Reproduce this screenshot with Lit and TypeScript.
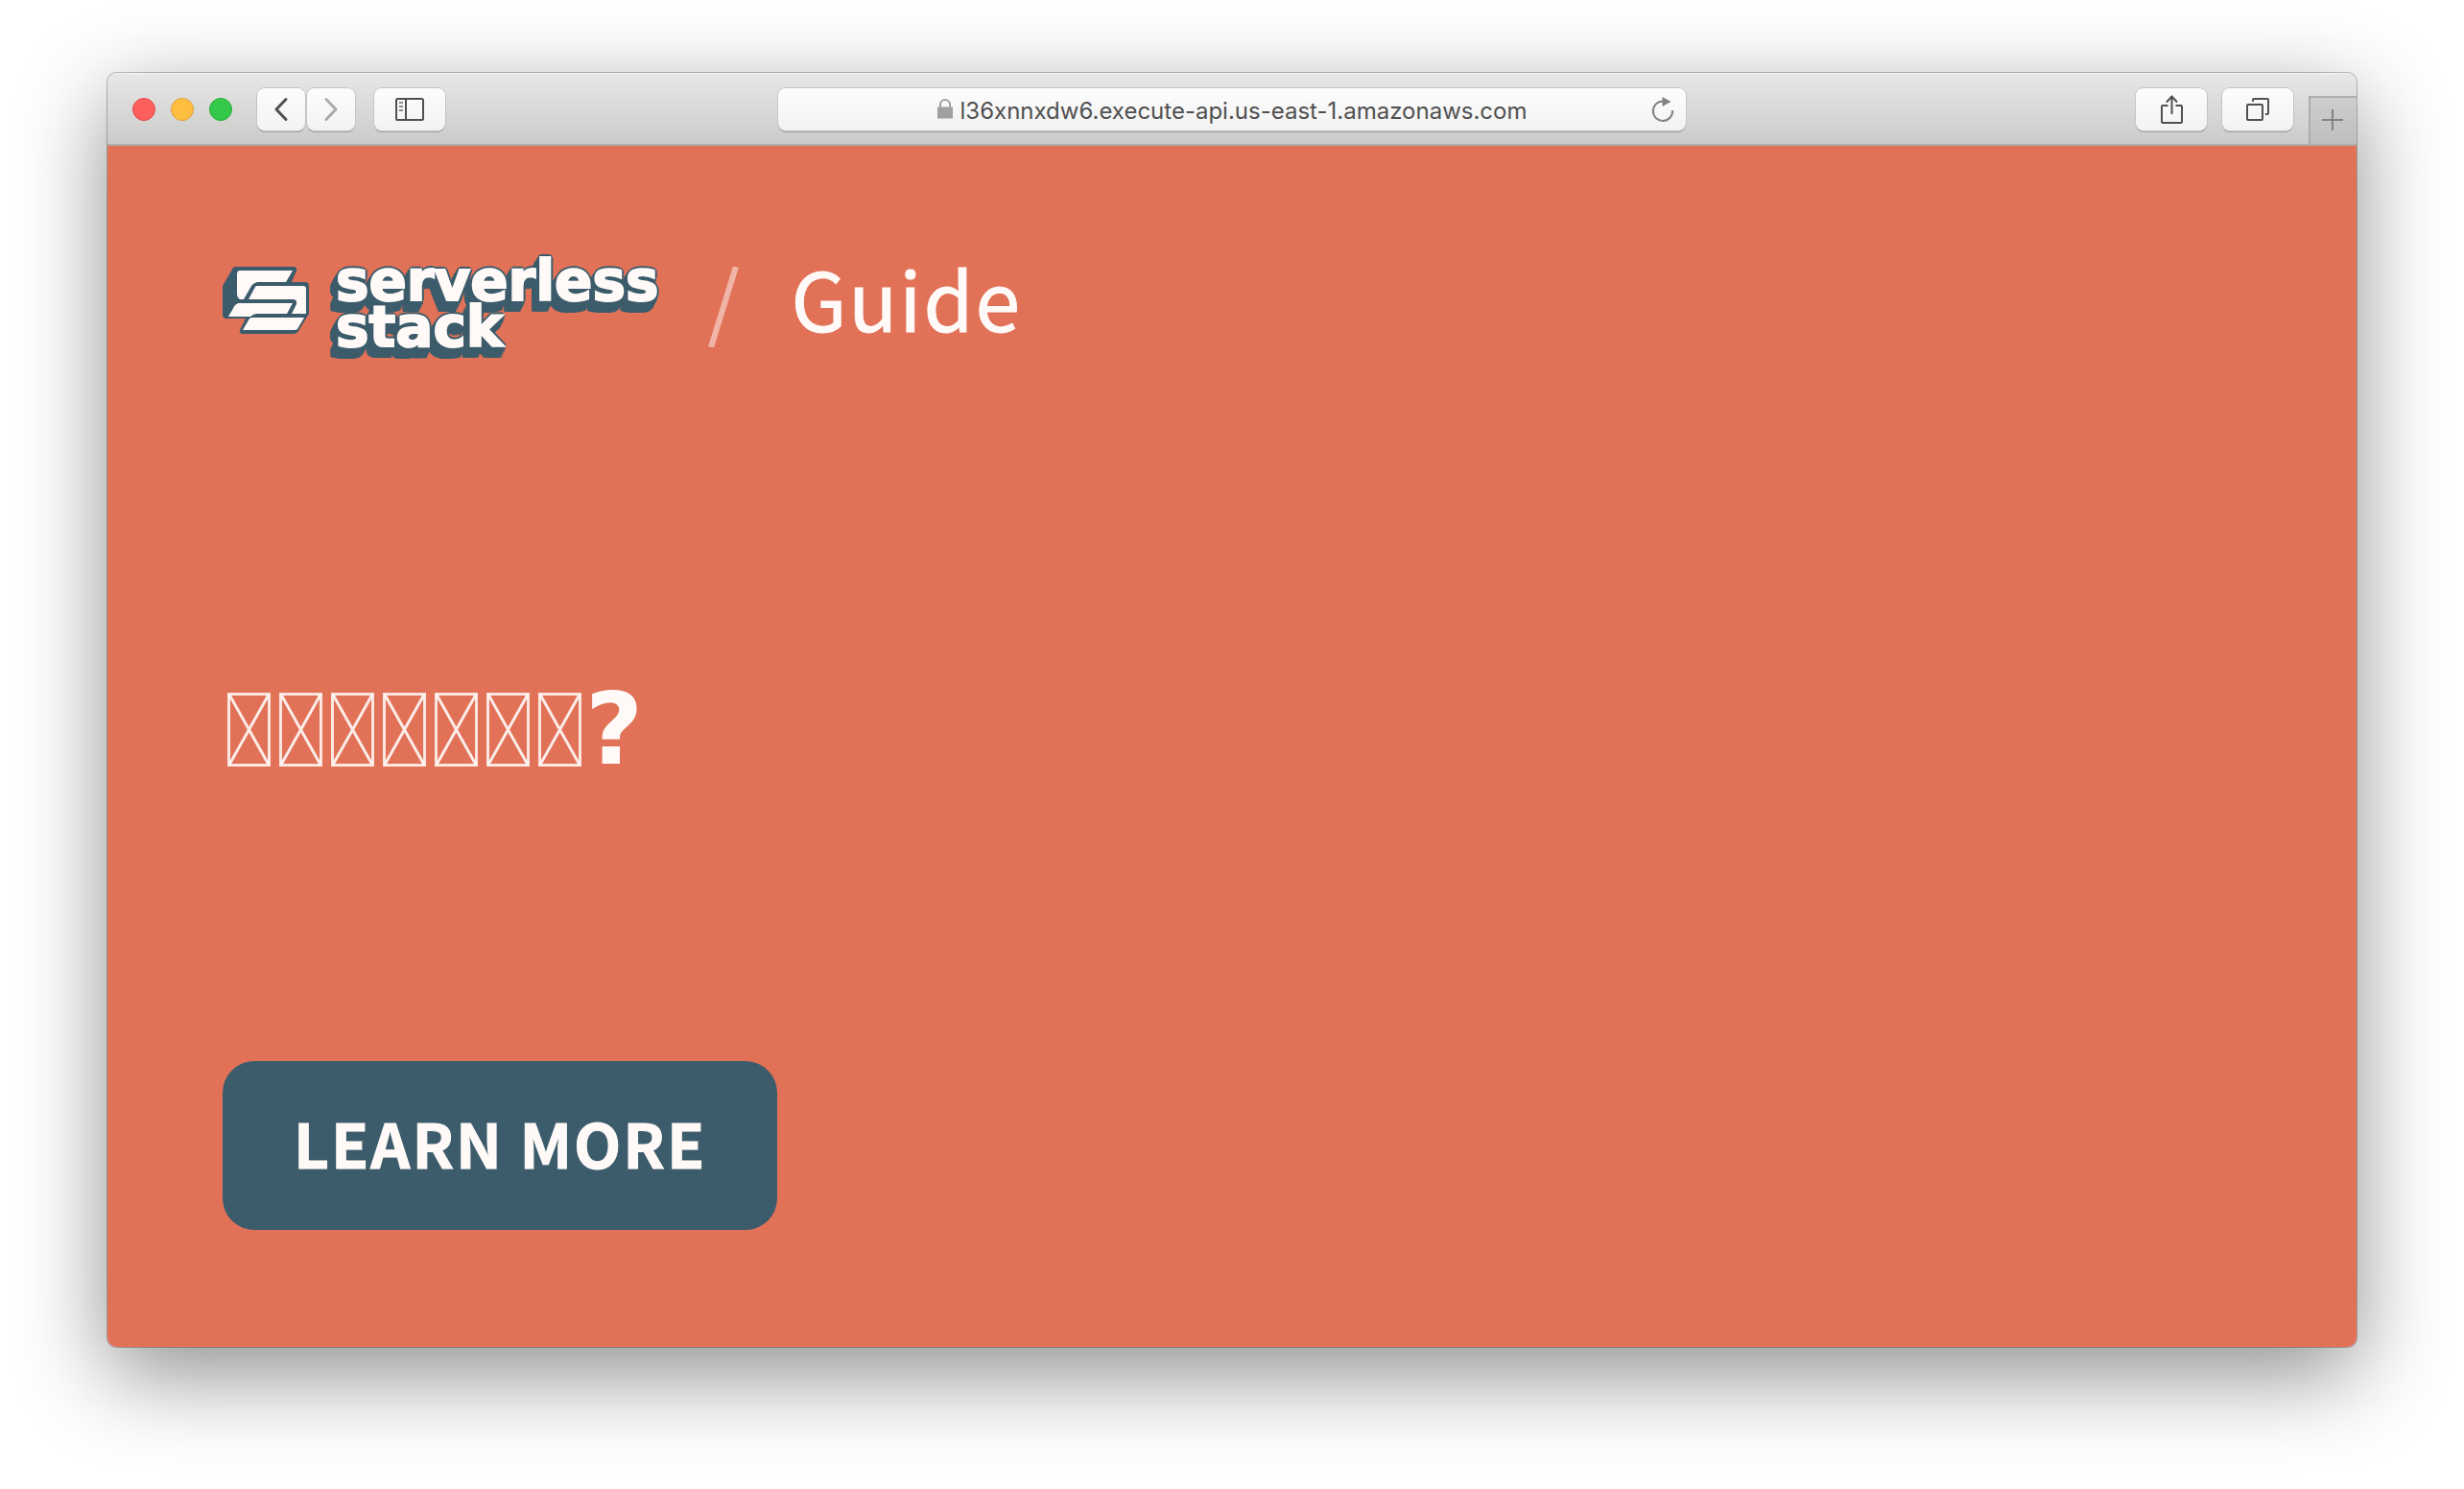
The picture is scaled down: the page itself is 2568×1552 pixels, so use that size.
import { LitElement, html, css } from "lit";
import { customElement, property } from "lit/decorators.js";

@customElement("browser-toolbar")
class BrowserToolbar extends LitElement {
  @property() address = "";

  static styles = css`
    :host {
      display: block;
    }
    .toolbar {
      box-sizing: border-box;
      display: grid;
      grid-template-columns: 1fr minmax(0, 946px) 1fr;
      align-items: center;
      height: 76px;
      border-top: 1px solid #f5f5f5;
      border-bottom: 2px solid #acaeac;
      background: linear-gradient(#e7e7e7, #cbcbc9);
    }
    button {
      margin: 0;
      padding: 0;
      border: 0;
      background: none;
      display: flex;
      align-items: center;
      justify-content: center;
    }
    .left,
    .right,
    .lights,
    .history {
      display: flex;
      align-items: center;
    }
    .left {
      padding-left: 26px;
    }
    .lights {
      gap: 16px;
      margin-right: 26px;
    }
    .light {
      width: 24px;
      height: 24px;
      border-radius: 50%;
      background: #fd605c;
      border: 1px solid #e2494a;
    }
    .light.minimize {
      background: #febf40;
      border-color: #dfa036;
    }
    .light.zoom {
      background: #34c94a;
      border-color: #28ab37;
    }
    .history {
      gap: 2px;
      margin-right: 20px;
    }
    .tool {
      box-sizing: border-box;
      width: 74px;
      height: 44px;
      border-radius: 8px;
      background: linear-gradient(#fdfdfd, #f2f2f2);
      box-shadow: 0 0 0 1px #c4c4c4, 0 2px 0 #a4a4a4;
    }
    .history .tool {
      width: 50px;
    }
    .address {
      display: grid;
      grid-template-columns: 1fr auto 1fr;
      align-items: center;
      height: 44px;
      border-radius: 8px;
      background: linear-gradient(#fdfdfd, #f2f2f2);
      box-shadow: 0 0 0 1px #c4c4c4, 0 2px 0 #a0a0a0;
    }
    .field {
      grid-column: 2;
      display: flex;
      align-items: center;
      gap: 8px;
    }
    input {
      field-sizing: content;
      margin: 0;
      padding: 4px 0 0;
      border: 0;
      outline: 0;
      background: none;
      color: #505050;
      font: 24px/32px Inter, "Liberation Sans", sans-serif;
    }
    .reload {
      justify-self: end;
      margin-right: 12px;
    }
    .right {
      justify-content: flex-end;
      align-self: stretch;
      gap: 16px;
    }
    .new-tab {
      align-self: flex-end;
      box-sizing: border-box;
      width: 50px;
      height: 50px;
      padding: 0 2px 2px 0;
      border-top: 2px solid #adadad;
      border-left: 2px solid #adadad;
      background: linear-gradient(#cecece, #bebebc);
    }
    svg {
      display: block;
    }
  `;

  render() {
    return html`
      <div class="toolbar">
        <div class="left">
          <div class="lights">
            <button class="light" aria-label="Close"></button>
            <button class="light minimize" aria-label="Minimize"></button>
            <button class="light zoom" aria-label="Zoom"></button>
          </div>
          <div class="history">
            <button class="tool" aria-label="Back">
              <svg width="16" height="26" viewBox="0 0 16 26" fill="none" stroke="#505050" stroke-width="3" stroke-linecap="round" stroke-linejoin="round"><path d="M13 2.500L3 13L13 23.500" /></svg>
            </button>
            <button class="tool" aria-label="Forward">
              <svg width="16" height="26" viewBox="0 0 16 26" fill="none" stroke="#ababab" stroke-width="3" stroke-linecap="round" stroke-linejoin="round"><path d="M3 2.500L13 13L3 23.500" /></svg>
            </button>
          </div>
          <button class="tool" aria-label="Show sidebar">
            <svg width="30" height="24" viewBox="0 0 30 24" fill="none" stroke="#505050" stroke-width="2"><rect x="1" y="1" width="28" height="22" rx="1.500" /><path d="M11 1V23" /><path d="M4 5H8M4 9H8M4 13H8" stroke="#8c8c8c" /></svg>
          </button>
        </div>
        <div class="address">
          <label class="field">
            <svg width="16" height="21" viewBox="0 0 16 21" role="img" aria-label="Secure address"><path d="M3 9V6a5 5 0 0 1 10 0V9" fill="none" stroke="#a0a0a0" stroke-width="2" /><path d="M0 8.500H16V20.500H0Z" fill="#a0a0a0" /></svg>
            <input type="text" size="46" .value=${this.address} />
          </label>
          <button class="reload" aria-label="Reload">
            <svg width="24" height="28" viewBox="0 0 24 28"><path d="M12 5.500A10.200 10.200 0 1 0 22.200 15" fill="none" stroke="#828282" stroke-width="2" /><path d="M11.500 1V11L20.500 6Z" fill="#828282" /></svg>
          </button>
        </div>
        <div class="right">
          <button class="tool share" aria-label="Share">
            <svg width="24" height="32" viewBox="0 0 24 32" fill="none" stroke="#505050" stroke-width="2"><path d="M8.500 12H3Q2 12 2 13V29Q2 30 3 30H22Q23 30 23 29V13Q23 12 22 12H16.500" /><path d="M12.500 21V3M7 8.500L12.500 2.500L18 8.500" /></svg>
          </button>
          <button class="tool" aria-label="Show all tabs">
            <svg width="24" height="24" viewBox="0 0 24 24" fill="none" stroke="#505050" stroke-width="2"><rect x="1" y="7" width="16" height="16" rx="1" /><path d="M7 4V2Q7 1 8 1H22Q23 1 23 2V16Q23 17 22 17H20" /></svg>
          </button>
          <button class="new-tab" aria-label="New tab">
            <svg width="22" height="22" viewBox="0 0 22 22" stroke="#828282" stroke-width="2"><path d="M11 0V22M0 11H22" /></svg>
          </button>
        </div>
      </div>
    `;
  }
}

@customElement("stack-logo")
class StackLogo extends LitElement {
  static styles = css`
    :host {
      display: flex;
      align-items: flex-start;
      gap: 27px;
      padding-bottom: 6px;
    }
    .mark {
      display: block;
      flex: none;
      margin-top: 9px;
    }
    .words {
      color: #fffaf8;
      font: bold 58px/48px "DejaVu Sans", sans-serif;
      -webkit-text-stroke: 2px #fffaf8;
      text-shadow: 3px 0 #3c5c6b, 2px 2px #3c5c6b, 0 3px #3c5c6b,
        2px -2px #3c5c6b, 0 -3px #3c5c6b, -2px -2px #3c5c6b, -3px 0 #3c5c6b,
        2px 4px #3c5c6b, -4px 1px #3c5c6b, -5px 3px #3c5c6b, 1px 6px #3c5c6b,
        -6px 4px #3c5c6b, -2px 6px #3c5c6b, -7px 6px #3c5c6b,
        0 8px #3c5c6b, -3px 8px #3c5c6b, -8px 8px #3c5c6b,
        -1px 10px #3c5c6b, -4px 10px #3c5c6b, -9px 10px #3c5c6b,
        -2px 12px #3c5c6b, -6px 12px #3c5c6b, -9px 12px #3c5c6b;
    }
    .line {
      display: block;
    }
  `;

  render() {
    return html`
      <svg class="mark" width="91" height="70" viewBox="0 0 91 70" aria-hidden="true">
        <path d="M13 0H75Q78 1 77 4L72 16H87Q90 17 90 20V49L79 67Q77 70 75 70H20Q17 69 18 66L24 54H3Q0 53 0 50V20L11 1Z" fill="#3c5c6b" />
        <g fill="#fffaf8">
          <path d="M18 4H73L66 16H36Q32 17 30 20L22 34H18Q15 32 15 28V8Q15 4 18 4Z" />
          <path d="M35 20H84Q87 20 87 23V49H72L77 39Q78 34 73 34H27L34 21Z" />
          <path d="M16 38H73L67 49H36Q32 49 29 52H6L13 40Z" />
          <path d="M30 53H85L78 65Q77 66 75 66H21L28 54Z" />
        </g>
      </svg>
      <div class="words"><span class="line">serverless</span><span class="line">stack</span></div>
    `;
  }
}

@customElement("app-root")
class AppRoot extends LitElement {
  static styles = css`
    :host {
      box-sizing: border-box;
      display: flex;
      min-height: 100vh;
      padding: 76px 112px 148px;
      background: #fff;
    }
    .window {
      flex: 1;
      min-width: 0;
      display: flex;
      flex-direction: column;
      overflow: hidden;
      border-radius: 10px;
      box-shadow: 0 0 0 1px rgba(0, 0, 0, 0.25), 0 28px 94px rgba(0, 0, 0, 0.45);
    }
    .page {
      flex: 1;
      display: flex;
      flex-direction: column;
      justify-content: space-between;
      align-items: flex-start;
      padding: 108px 120px 122px;
      background: #e17157;
      color: #fffaf8;
      font-family: "Noto Sans CJK SC", "Noto Sans", sans-serif;
    }
    .brand {
      display: flex;
      align-items: center;
    }
    .slash {
      display: block;
      margin: 0 54px 0 52px;
    }
    .section {
      padding-bottom: 20px;
      font-size: 84px;
      line-height: 100px;
      letter-spacing: 2px;
      -webkit-text-stroke: 1px;
    }
    .title {
      display: flex;
      align-items: center;
      margin: 34px 0 0;
      font: bold 104px/120px "DejaVu Sans", sans-serif;
    }
    .missing {
      display: block;
      margin: 0 4px 0 5px;
    }
    .more {
      display: block;
      padding: 36px 74px 44px;
      border-radius: 33px;
      background: #3c5c6b;
      color: inherit;
      font-size: 64px;
      font-weight: bold;
      line-height: 96px;
      letter-spacing: 2px;
      -webkit-text-stroke: 1px;
      text-decoration: none;
      white-space: nowrap;
    }
  `;

  private missingGlyph() {
    return html`<svg class="missing" width="45" height="77" viewBox="0 0 45 77" fill="none" stroke="#fffaf8" aria-hidden="true">
      <rect x="1.500" y="1.500" width="42" height="74" stroke-width="3" stroke-opacity="0.85" />
      <path d="M2 2L43 75M43 2L2 75" stroke-width="3" stroke-opacity="0.9" />
    </svg>`;
  }

  render() {
    return html`
      <div class="window">
        <browser-toolbar address="l36xnnxdw6.execute-api.us-east-1.amazonaws.com"></browser-toolbar>
        <main class="page">
          <header class="brand">
            <stack-logo></stack-logo>
            <svg class="slash" width="32" height="84" viewBox="0 0 32 84" aria-hidden="true"><path d="M3 84L29 0" stroke="#fffaf8" stroke-opacity="0.5" stroke-width="6" /></svg>
            <span class="section">Guide</span>
          </header>
          <h1 class="title">${Array.from({ length: 7 }, () => this.missingGlyph())}<span>?</span></h1>
          <a class="more" href="#learn-more">LEARN MORE</a>
        </main>
      </div>
    `;
  }
}
